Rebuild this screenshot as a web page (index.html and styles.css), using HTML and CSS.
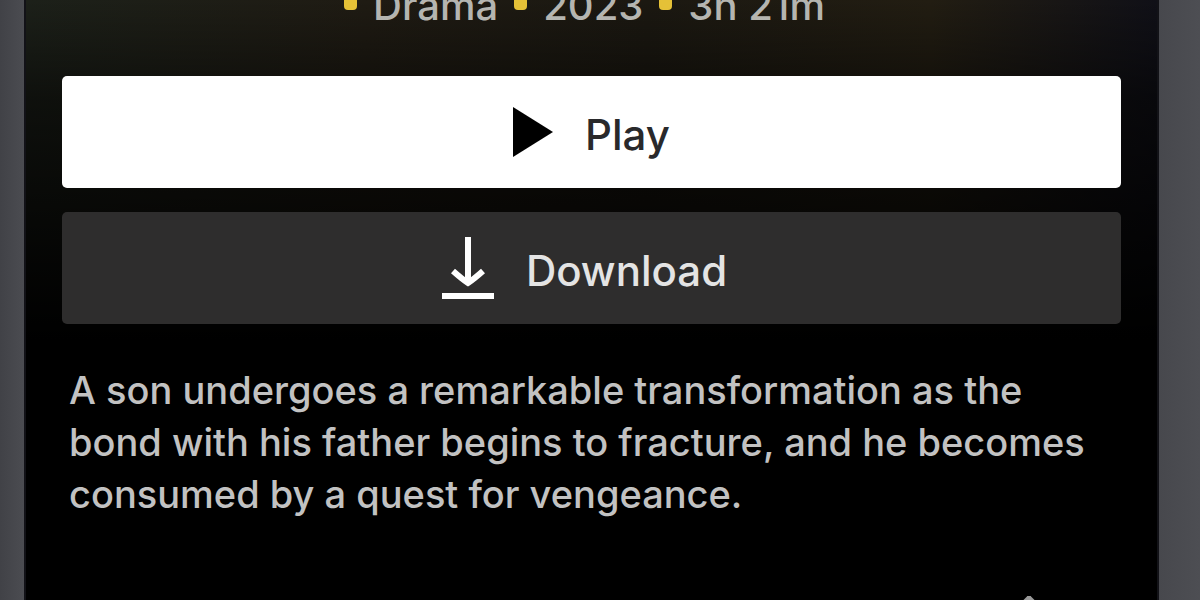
FILE: index.html
```html
<!DOCTYPE html>
<html lang="en">
<head>
<meta charset="utf-8">
<meta name="viewport" content="width=device-width, initial-scale=1">
<title>Drama</title>
<link rel="stylesheet" href="styles.css">
</head>
<body>
<div class="phone">
  <main class="screen">
    <ul class="meta">
      <li class="meta-item">Drama</li>
      <li class="meta-item">2023</li>
      <li class="meta-item">3h 21m</li>
    </ul>
    <div class="actions">
      <button class="button button-play" type="button">
        <svg class="icon-play" viewBox="0 0 40 50" aria-hidden="true"><path d="M0 0 40 25 0 50Z" fill="currentColor"/></svg>
        <span class="button-label">Play</span>
      </button>
      <button class="button button-download" type="button">
        <svg class="icon-download" viewBox="0 0 52 66" aria-hidden="true"><path d="M26 2V48" fill="none" stroke="currentColor" stroke-width="6"/><path d="M11 36Q20 44 26 48Q32 44 41 36" fill="none" stroke="currentColor" stroke-width="6"/><path d="M0 61H52" stroke="currentColor" stroke-width="6"/></svg>
        <span class="button-label">Download</span>
      </button>
    </div>
    <p class="synopsis">A son undergoes a remarkable transformation as the bond with his father begins to fracture, and he becomes consumed by a quest for vengeance.</p>
    <div class="shortcuts">
      <svg class="icon-share" viewBox="0 0 40 50" aria-hidden="true"><path d="M20 2 2 20M20 2 38 20M20 2V50" fill="none" stroke="currentColor" stroke-width="5" stroke-linecap="round"/></svg>
    </div>
  </main>
</div>
</body>
</html>
```
FILE: styles.css
```css
* {
  box-sizing: border-box;
}

body {
  margin: 0;
  background: #48494e;
  font-family: Inter, "Liberation Sans", sans-serif;
}

.phone {
  height: 100vh;
  padding: 0 41px 0 24px;
  overflow: hidden;
  background: linear-gradient(90deg, #414247, #4b4c51 24px, #47484d calc(100% - 41px), #4d4e53);
}

.screen {
  height: 100%;
  padding: 0 36px;
  overflow: hidden;
  border: solid #121217;
  border-width: 0 2px;
  background:
    linear-gradient(180deg, transparent, rgb(0 0 0 / 50%) 100px, #000 340px),
    linear-gradient(90deg, #1c2019, #1f1b13 30%, #1b1811 55%, #221d12 80%, #101017);
}

.meta {
  display: flex;
  justify-content: center;
  align-items: flex-end;
  gap: 16px;
  height: 30px;
  margin: 0 0 46px;
  padding: 0 14px 0 0;
  list-style: none;
  color: #b5b5b0;
  font-size: 40px;
  font-weight: 500;
  line-height: 48px;
}

.meta-item {
  display: flex;
  align-items: center;
  gap: 16px;
}

.meta-item::before {
  content: "";
  width: 13px;
  height: 13px;
  margin-bottom: 6px;
  border-radius: 4px;
  background: #e5c137;
}

.actions {
  display: grid;
  gap: 24px;
}

.button {
  display: flex;
  justify-content: center;
  align-items: center;
  gap: 32px;
  width: 100%;
  height: 112px;
  padding: 0;
  border: 0;
  border-radius: 5px;
  font: 500 42px/56px Inter, "Liberation Sans", sans-serif;
}

.button-label {
  padding-top: 6px;
}

.button-play {
  background: #fff;
  color: #29292b;
}

.button-download {
  padding-right: 14px;
  background: #2e2d2d;
  color: #e4e4e4;
}

.icon-play {
  width: 40px;
  height: 50px;
  color: #000;
}

.icon-download {
  width: 52px;
  height: 66px;
  color: #fff;
}

.synopsis {
  margin: 40px 0 0;
  padding: 0 7px;
  color: #c2c2c2;
  font-size: 38px;
  font-weight: 500;
  line-height: 52px;
}

.shortcuts {
  display: flex;
  justify-content: flex-end;
  margin-top: 76px;
  padding-right: 72px;
  color: #999;
}

.icon-share {
  width: 40px;
  height: 50px;
}
```
